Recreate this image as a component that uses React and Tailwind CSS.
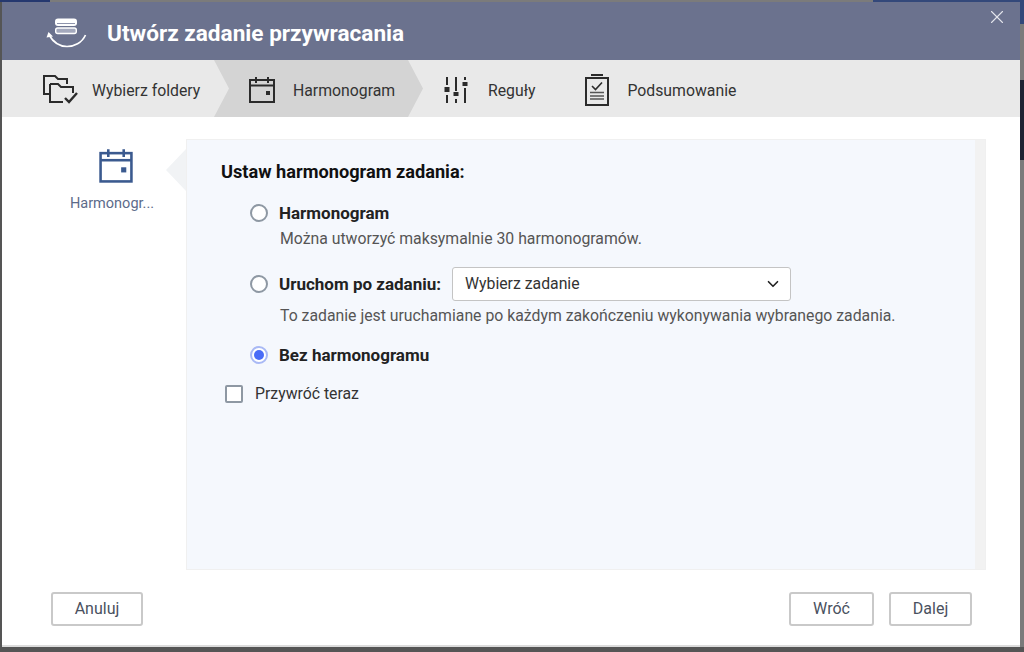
import { useState } from 'react'
import { ChevronDown, X } from 'lucide-react'

function RestoreLogo() {
  return (
    <svg width="42" height="34" viewBox="0 0 42 34" fill="none" stroke="#fff" className="shrink-0">
      <rect x="9" y="4.5" width="22" height="7.5" rx="3" fill="#fff" stroke="none" />
      <path d="M11 9.5 H29" stroke="#8f95ad" strokeWidth="1" />
      <rect x="9.7" y="14" width="20.6" height="5.5" rx="2" fill="#a4a9bd" strokeWidth="1.4" />
      <path d="M3 21 C8 29.5 15 32.5 21 32.5 C28 32.5 36 29 39.5 21" strokeWidth="1.7" />
      <path d="M0.5 23.5 L2.5 18 L7 22.5 Z" fill="#fff" stroke="none" />
    </svg>
  )
}

function FoldersIcon() {
  return (
    <svg width="36" height="30" viewBox="0 0 36 30" fill="none" stroke="#2b2b2b" strokeWidth="2">
      <path d="M8 20 H2 V2 H13 L16 5 H25 V10" />
      <path d="M8 10 H16 L19 13 H31 V19" />
      <path d="M8 10 V28 H21" />
      <path d="M23 24 L27 28 L35 19" strokeWidth="2.4" />
    </svg>
  )
}

function CalendarIcon({ color = '#2b2b2b', size = 28, className }) {
  return (
    <svg width={size} height={size} viewBox="0 0 28 28" fill="none" stroke={color} strokeWidth="2" className={className}>
      <rect x="2" y="4" width="24" height="22" />
      <path d="M2 9.5 H26" />
      <path d="M8 1 V7 M20 1 V7" />
      <rect x="18" y="15" width="4" height="4" fill={color} stroke="none" />
    </svg>
  )
}

function SlidersIcon() {
  return (
    <svg width="24" height="28" viewBox="0 0 24 28" fill="#2b2b2b" className="mt-[2px]">
      <rect x="2" y="1" width="2" height="8" />
      <rect x="0.5" y="11" width="5" height="5" />
      <rect x="2" y="19" width="2" height="8" />
      <rect x="11" y="1" width="2" height="14" />
      <rect x="9.5" y="16" width="5" height="4" />
      <rect x="11" y="23" width="2" height="4" />
      <rect x="20" y="1" width="2" height="3" />
      <rect x="18.5" y="6" width="5" height="4" />
      <rect x="20" y="12" width="2" height="15" />
    </svg>
  )
}

function SummaryIcon() {
  return (
    <svg width="24" height="32" viewBox="0 0 24 32" fill="none" stroke="#2b2b2b" className="mt-[2px]">
      <path d="M6 1 H18" strokeWidth="2" />
      <rect x="1" y="4" width="22" height="27" strokeWidth="2" />
      <path d="M7 12 L10.5 15.5 L17 8.5" strokeWidth="1.6" />
      <path d="M5 18.5 H19 M5 22 H19 M5 25 H19" strokeWidth="1.3" stroke="#555" />
    </svg>
  )
}

function Radio({ checked }) {
  return (
    <span
      className={`flex h-[18px] w-[18px] shrink-0 items-center justify-center rounded-full border-2 bg-white ${
        checked ? 'border-[#a9b9f5]' : 'border-[#8e98a3]'
      }`}
    >
      {checked && <span className="h-[10px] w-[10px] rounded-full bg-[#4a6cf7]" />}
    </span>
  )
}

function FooterButton({ children, className }) {
  return (
    <button className={`h-[34px] rounded-[3px] border-2 border-[#c9c9c9] bg-white text-[16px] text-[#4a5160] ${className}`}>
      {children}
    </button>
  )
}

export default function App() {
  const [schedule] = useState('none')

  return (
    <div className="h-[652px] w-[1024px] overflow-hidden bg-[#555555] font-['Roboto',sans-serif]">
      <div className="flex h-[2px] bg-[#7b7b7b]">
        <div className="w-[50px] bg-[#25386f]" />
        <div className="flex-1" />
        <div className="w-[151px] bg-[#33487a]" />
      </div>
      <div className="flex bg-[#555555] pl-[2px]">
        <div className="flex h-[645px] w-[1018px] shrink-0 flex-col border-b-2 border-[#dcdcdc] bg-white">
          <header className="relative flex h-[58px] shrink-0 items-center bg-[#6b728e] pl-[44px]">
            <RestoreLogo />
            <h1 className="ml-[19px] mt-[6px] text-[22.6px] font-bold text-white">Utwórz zadanie przywracania</h1>
            <X className="absolute right-[12px] top-[4px] text-[#e3e5ec]" size={22} strokeWidth={1.2} />
          </header>

          <nav className="flex h-[57px] shrink-0 items-center bg-[#e9e9e9] text-[15.8px] text-[#333]">
            <div className="flex w-[212px] shrink-0 items-center pl-[40px]">
              <FoldersIcon />
              <span className="ml-[14px] mt-[4px]">Wybierz foldery</span>
            </div>
            <div className="flex h-full w-[209px] shrink-0 items-center bg-[#d4d4d4] pl-[34px] [clip-path:polygon(0_0,194px_0,209px_50%,194px_100%,0_100%,15px_50%)]">
              <CalendarIcon className="mt-[2px]" />
              <span className="ml-[17px] mt-[4px]">Harmonogram</span>
            </div>
            <div className="ml-[21px] flex items-center">
              <SlidersIcon />
              <span className="ml-[20px] mt-[4px]">Reguły</span>
            </div>
            <div className="ml-[50px] flex items-center">
              <SummaryIcon />
              <span className="ml-[18px] mt-[4px]">Podsumowanie</span>
            </div>
          </nav>

          <main className="flex flex-1 pt-[22px]">
            <aside className="relative flex w-[184px] shrink-0 flex-col pl-[68px]">
              <div className="flex w-[84px] flex-col items-center pt-[9px]">
                <CalendarIcon color="#3b5a8f" size={36} className="ml-[8px]" />
                <span className="mt-[9px] whitespace-nowrap text-[14.5px] text-[#5c6b8a]">Harmonogr...</span>
              </div>
              <span className="absolute right-0 top-[10px] h-0 w-0 border-y-[21px] border-r-[20px] border-y-transparent border-r-[#f1f3f5]" />
            </aside>

            <section className="flex h-[431px] w-[800px] border border-[#f0f0f0] bg-[#f2f2f2]">
              <div className="w-[788px] bg-[#f5f8fd] pl-[34px] pt-[22px] text-[15.8px] text-[#222]">
                <h2 className="text-[18.2px] font-bold leading-[19px] text-[#111]">Ustaw harmonogram zadania:</h2>

                <div className="ml-[29px] mt-[22px] flex items-center gap-[11px]">
                  <Radio checked={schedule === 'recurring'} />
                  <span className="text-[17px] font-bold leading-[20px]">Harmonogram</span>
                </div>
                <p className="ml-[59px] mt-[7px] leading-[17px] text-[#555]">
                  Można utworzyć maksymalnie 30 harmonogramów.
                </p>

                <div className="ml-[29px] mt-[20px] flex items-center gap-[11px]">
                  <Radio checked={schedule === 'after'} />
                  <span className="text-[17px] font-bold leading-[20px]">Uruchom po zadaniu:</span>
                  <div className="flex h-[34px] w-[339px] items-center justify-between rounded-[3px] border border-[#c4c4c4] bg-white pl-[12px] pr-[8px] text-[#333]">
                    <span>Wybierz zadanie</span>
                    <ChevronDown size={18} strokeWidth={2.2} className="text-[#222]" />
                  </div>
                </div>
                <p className="ml-[59px] mt-[6px] whitespace-nowrap leading-[17px] text-[#555]">
                  To zadanie jest uruchamiane po każdym zakończeniu wykonywania wybranego zadania.
                </p>

                <div className="ml-[29px] mt-[21px] flex items-center gap-[11px]">
                  <Radio checked={schedule === 'none'} />
                  <span className="text-[17px] font-bold leading-[20px]">Bez harmonogramu</span>
                </div>

                <div className="ml-[4px] mt-[19px] flex items-center gap-[12px]">
                  <span className="h-[18px] w-[18px] rounded-[2px] border-2 border-[#8e98a3] bg-white" />
                  <span className="leading-[20px] text-[#333]">Przywróć teraz</span>
                </div>
              </div>
            </section>
          </main>

          <footer className="flex h-[73px] shrink-0 items-start justify-between pl-[49px] pr-[48px] pt-[20px]">
            <FooterButton className="w-[92px]">Anuluj</FooterButton>
            <div className="flex gap-[15px]">
              <FooterButton className="w-[85px]">Wróć</FooterButton>
              <FooterButton className="w-[83px]">Dalej</FooterButton>
            </div>
          </footer>
        </div>
        <div className="flex h-[645px] flex-1 flex-col bg-[#7b7b7b]">
          <div className="h-[22px] bg-[#33487a]" />
          <div className="h-[56px]" />
          <div className="h-[80px] bg-[#1d2433]" />
        </div>
      </div>
    </div>
  )
}
